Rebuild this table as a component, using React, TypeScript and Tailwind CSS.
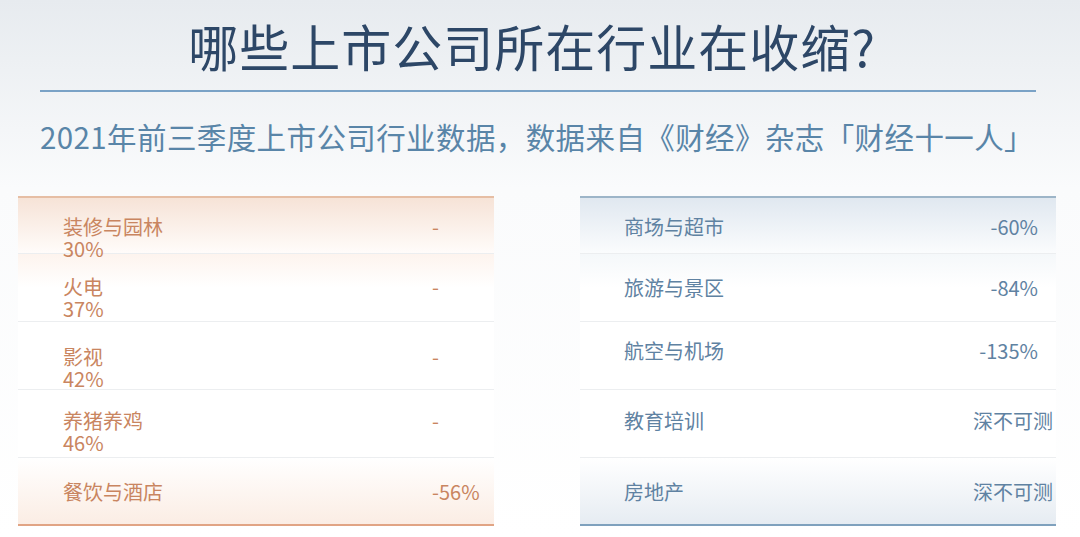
import React from 'react';

type Row = {
  name: string;
  value: string;
  pct?: string;
  pt: string;
  bg: string;
  wide?: boolean;
};

const heights = ['h-[55px]', 'h-[68px]', 'h-[68px]', 'h-[68px]', 'h-[67px]'];

const leftRows: Row[] = [
  { name: '装修与园林', pct: '30%', value: '-', pt: 'pt-[18px]', bg: 'bg-gradient-to-b from-[#f6e3d7] to-[#fffcfa]' },
  { name: '火电', pct: '37%', value: '-', pt: 'pt-[22px]', bg: 'bg-gradient-to-b from-[#fdf4ee] via-white to-white' },
  { name: '影视', pct: '42%', value: '-', pt: 'pt-[24px]', bg: 'bg-white' },
  { name: '养猪养鸡', pct: '46%', value: '-', pt: 'pt-[20px]', bg: 'bg-white' },
  { name: '餐饮与酒店', value: '-56%', pt: 'pt-[23px]', bg: 'bg-gradient-to-b from-white to-[#fbede4]' }
];

const rightRows: Row[] = [
  { name: '商场与超市', value: '-60%', pt: 'pt-[18px]', bg: 'bg-gradient-to-b from-[#e0e8f0] to-[#fbfcfd]' },
  { name: '旅游与景区', value: '-84%', pt: 'pt-[23px]', bg: 'bg-gradient-to-b from-[#f5f8fa] via-white to-white' },
  { name: '航空与机场', value: '-135%', pt: 'pt-[18px]', bg: 'bg-white' },
  { name: '教育培训', value: '深不可测', pt: 'pt-[20px]', bg: 'bg-white', wide: true },
  { name: '房地产', value: '深不可测', pt: 'pt-[23px]', bg: 'bg-gradient-to-b from-white to-[#e6ecf2]', wide: true }
];

const LeftTable: React.FC = () => (
  <div className="w-[476px] border-t-2 border-b-2 border-t-[#e6bea4] border-b-[#e1a484] text-[#c98560]">
    {leftRows.map((r, i) => (
      <div
        key={r.name}
        className={`${heights[i]} ${r.bg} ${r.pt} ${i > 0 ? 'border-t border-[#eceef0]' : ''} flex items-start pl-[45px] text-[20px] leading-[22px]`}
      >
        <div className="w-[369px]">
          <div>{r.name}</div>
          {r.pct && <div>{r.pct}</div>}
        </div>
        <div>{r.value}</div>
      </div>
    ))}
  </div>
);

const RightTable: React.FC = () => (
  <div className="w-[476px] border-t-2 border-b-2 border-t-[#9db5c8] border-b-[#7fa1bd] text-[#5f82a2]">
    {rightRows.map((r, i) => (
      <div
        key={r.name}
        className={`${heights[i]} ${r.bg} ${r.pt} ${i > 0 ? 'border-t border-[#eceef0]' : ''} flex items-start justify-between pl-[44px] ${r.wide ? 'pr-[3px]' : 'pr-[18px]'} text-[20px] leading-[22px]`}
      >
        <div>{r.name}</div>
        <div>{r.value}</div>
      </div>
    ))}
  </div>
);

export default function App() {
  return (
    <div
      className="w-[1080px] h-[537px] overflow-hidden bg-gradient-to-b from-[#e7ebef] via-[#fafbfc] via-35% to-white"
      style={{ fontFamily: '"Noto Sans CJK SC", "Noto Sans", sans-serif' }}
    >
      <div className="px-[40px] pt-[13px]">
        <h1 className="pr-[16px] text-center text-[50px] leading-[64px] text-[#2d4767] tracking-[1px]">
          哪些上市公司所在行业在收缩?
        </h1>
        <div className="mt-[13px] w-[996px] h-[2px] bg-[#7aa2c6]" />
        <p className="mt-[24px] text-[29.5px] leading-[40px] text-[#5985a8] tracking-[0.4px] whitespace-nowrap">
          2021年前三季度上市公司行业数据，数据来自《财经》杂志「财经十一人」
        </p>
      </div>
      <div className="mt-[40px] flex gap-[86px] pl-[18px]">
        <LeftTable />
        <RightTable />
      </div>
    </div>
  );
}
